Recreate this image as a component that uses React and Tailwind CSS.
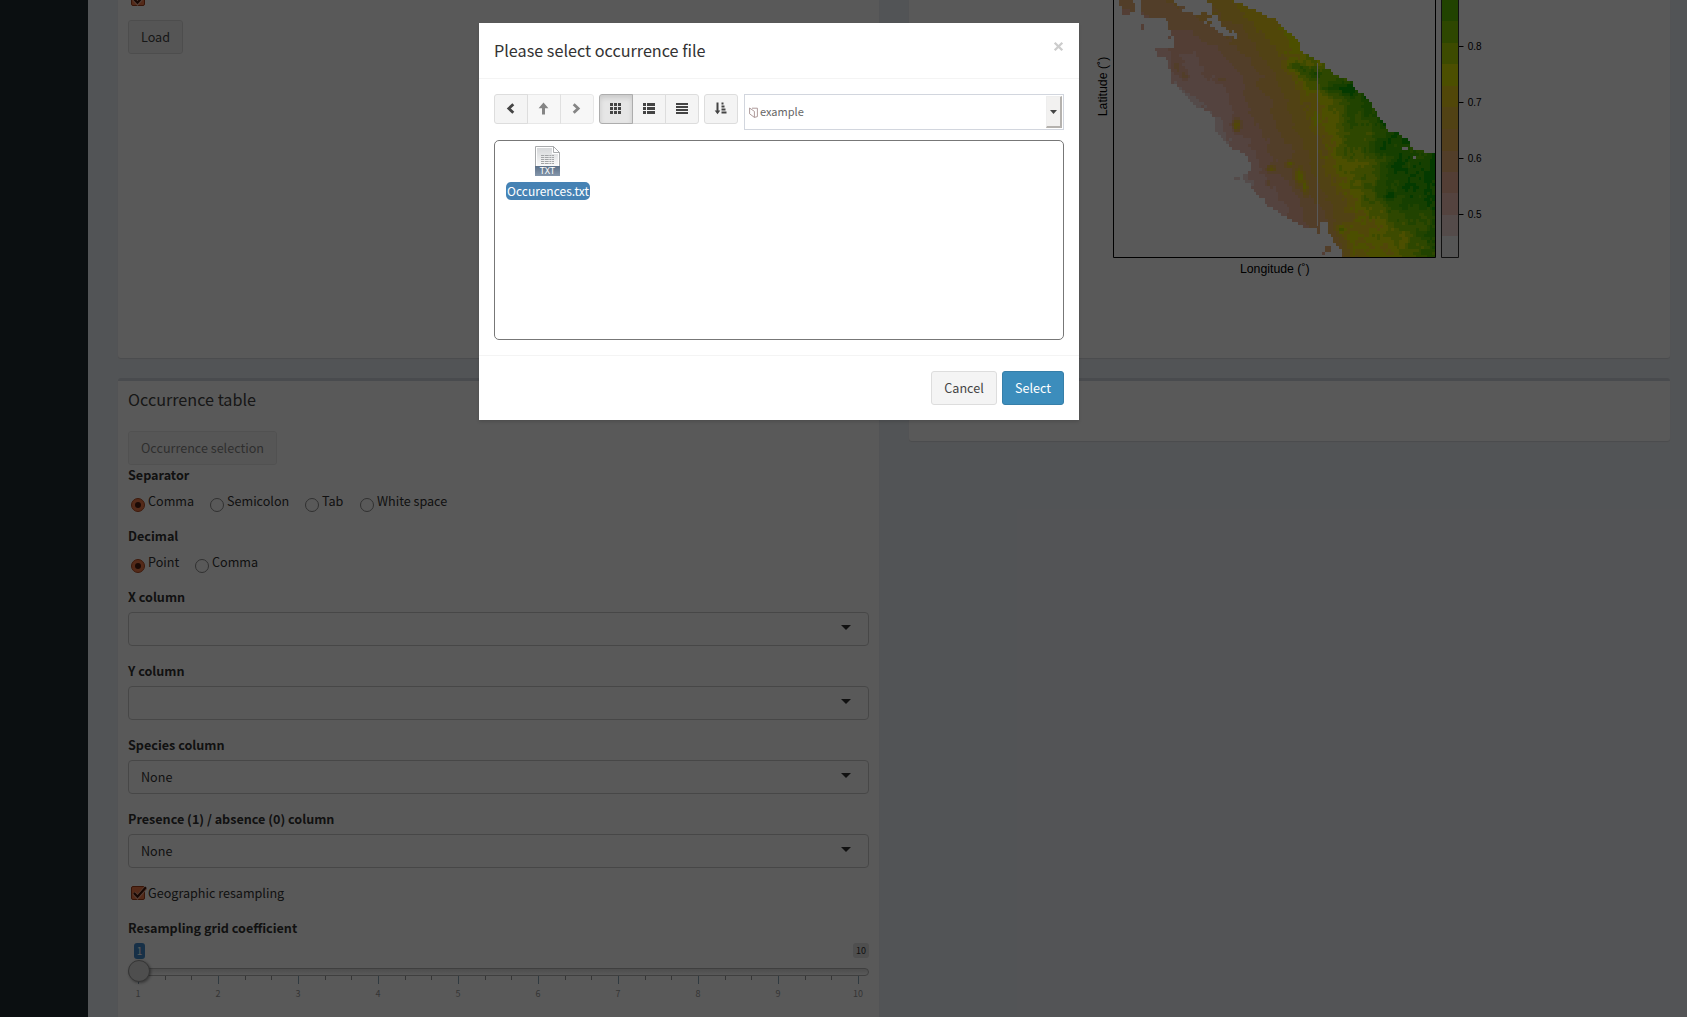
import React from "react";

const PALETTE = [
  "#f2f2f2", "#f1d6d3", "#efbfb5", "#edb197", "#ecb176", "#ebb554", "#e9bd3a",
  "#e8cb1b", "#d9e100", "#afd600", "#84cc00", "#5ec000", "#40b600", "#0ca600",
];

/* suitability levels sampled every 80 x 90 units */
const FIELD = [
  [3.6, 4, 4.5, 5, 6.2, 7.2, 7.7, 8, 9, 10, 11, 12, 12],
  [2, 2.6, 3.2, 3.6, 4.6, 5.8, 7, 8.2, 9, 10, 11, 12, 12],
  [1, 1.6, 2.2, 2.4, 3, 4.4, 5.8, 7.9, 8.6, 10, 11, 12, 12],
  [1, 1, 1.4, 1.6, 2.3, 3.5, 4.9, 6.5, 9, 11.8, 12.3, 12, 12],
  [1, 1, 1, 1, 1.4, 3.2, 4.4, 6.1, 7.8, 10.2, 12, 12, 12],
  [1, 1, 1, 1, 1, 2, 3.7, 5.1, 7.1, 9.2, 11.2, 12, 12.5],
  [1, 1, 1, 1, 1, 1.5, 2.9, 4.3, 6.5, 8.2, 10, 12, 12.8],
  [1, 1, 1, 1, 1, 1.4, 2, 3.2, 4.8, 7.2, 9.1, 10.8, 11.9],
  [1, 1, 1, 1, 1, 1, 2, 2.6, 4.2, 7.2, 8, 9, 10.9],
  [1, 1, 1, 1, 1, 1, 2, 2.4, 3, 6.6, 7.8, 8.4, 9.4],
];

const EAST = [
  [0, 450], [18, 495], [36, 535], [50, 560], [63, 595], [85, 612], [100, 630], [120, 655],
  [155, 663], [165, 685], [180, 705], [190, 730], [205, 740], [222, 762], [235, 790],
  [245, 812], [260, 822], [275, 835], [290, 860], [300, 868], [325, 880], [345, 895],
  [365, 907], [380, 918], [394, 922], [398, 955], [412, 968], [420, 985], [440, 993],
  [452, 1008], [457, 1050], [465, 1068], [780, 1068],
];
const WEST = [
  [0, 110], [12, 118], [25, 127], [49, 127], [50, 248], [66, 261], [90, 271], [110, 279],
  [147, 279], [148, 222], [158, 231], [165, 250], [180, 262], [210, 270], [248, 276],
  [258, 294], [270, 305], [285, 312], [300, 328], [318, 347], [330, 378], [345, 400],
  [395, 408], [405, 418], [425, 434], [440, 447], [450, 457], [456, 485], [465, 497],
  [485, 510], [518, 508], [525, 486], [540, 492], [555, 512], [570, 520], [585, 535],
  [595, 548], [620, 567], [630, 590], [650, 610], [662, 640], [672, 655], [684, 680],
  [692, 685], [693, 744], [715, 757], [735, 765], [745, 785], [780, 787],
];
const HOLES = [
  [158, 0, 184, 9], [164, 9, 181, 45], [148, 40, 181, 50], [284, 0, 380, 9], [290, 9, 397, 18],
  [316, 18, 400, 27], [310, 27, 400, 36], [340, 36, 364, 46], [382, 36, 400, 46],
  [380, 54, 397, 63], [397, 46, 415, 63], [372, 63, 380, 72], [397, 63, 425, 81],
  [388, 72, 397, 81], [405, 81, 438, 90], [413, 90, 450, 99], [430, 99, 470, 108],
  [458, 90, 466, 99], [463, 108, 471, 117], [262, 118, 279, 145], [970, 438, 979, 447],
  [1002, 465, 1011, 474], [722, 664, 740, 694], [685, 680, 712, 694], [722, 672, 745, 700],
];
const ISLANDS = [
  [180, 68, 188, 86], [262, 110, 270, 119], [462, 534, 480, 543], [712, 675, 720, 703],
  [738, 740, 754, 755], [729, 757, 738, 765], [480, 95, 487, 102], [364, 40, 380, 49],
  [232, 158, 262, 172],
];
const BUMPS = [
  [470, 376, 13, 20, 5], [658, 530, 14, 30, 4], [676, 565, 7, 24, 3.5], [628, 492, 12, 9, 4],
  [575, 507, 13, 10, 4], [290, 200, 14, 20, 2.2], [312, 226, 14, 16, 2.2], [425, 240, 14, 8, 1.6],
  [566, 550, 9, 8, 1.6], [650, 200, 34, 14, 2.4], [700, 222, 40, 14, 2.8], [785, 688, 14, 14, 3],
  [770, 262, 44, 24, 1.8], [985, 560, 26, 16, 1.4], [930, 590, 30, 30, 1.8], [860, 560, 20, 12, 1.6],
];

const lerp = (a, b, t) => a + (b - a) * t;
function edge(points, y) {
  for (let i = 1; i < points.length; i++) {
    if (y <= points[i][0]) {
      const [y0, x0] = points[i - 1];
      const [y1, x1] = points[i];
      return lerp(x0, x1, (y - y0) / (y1 - y0));
    }
  }
  return points[points.length - 1][1];
}
const hash = (i, j) => {
  const s = Math.sin(i * 127.1 + j * 311.7) * 43758.5453;
  return s - Math.floor(s);
};
function smooth(x, y) {
  const i = Math.floor(x), j = Math.floor(y), u = x - i, v = y - j;
  return lerp(lerp(hash(i, j), hash(i + 1, j), u), lerp(hash(i, j + 1), hash(i + 1, j + 1), u), v) - 0.5;
}
const within = (boxes, x, y) => boxes.some(([a, b, c, d]) => x >= a && x < c && y >= b && y < d);

const CW = 8.25, CH = 9;
function buildCells() {
  const runs = [];
  for (let r = 0; r < 86; r++) {
    const y = r * CH + CH / 2;
    const w = edge(WEST, y), e = edge(EAST, y);
    let run = null;
    for (let c = 0; c < 117; c++) {
      const x = 100 + c * CW + CW / 2;
      const land = within(ISLANDS, x, y) || (x >= w && x <= e && !within(HOLES, x, y));
      let level = -1;
      if (land) {
        const gx = Math.min(11.999, (x - 100) / 80), gy = Math.min(8.999, y / 90);
        const i = Math.floor(gx), j = Math.floor(gy);
        let v = lerp(lerp(FIELD[j][i], FIELD[j][i + 1], gx - i), lerp(FIELD[j + 1][i], FIELD[j + 1][i + 1], gx - i), gy - j);
        const rough = v > 6.6 && y > 150 ? 1 : 0.24;
        v += rough * (smooth(x / 48, y / 44) * 1.8 + smooth(x / 19, y / 19) * 1.9 + (hash(c, r) - 0.5) * 0.8);
        for (const [bx, by, rx, ry, a] of BUMPS) v += a * Math.exp(-(((x - bx) / rx) ** 2) - ((y - by) / ry) ** 2);
        level = Math.max(1, Math.min(13, Math.round(v)));
      }
      if (run && run.level === level) run.n++;
      else {
        run = { c, r, n: 1, level };
        if (level > 0) runs.push(run);
      }
    }
  }
  return runs;
}
const CELLS = buildCells();

const LEGEND = [
  [0, 21, 11], [21, 43, 10], [43, 64, 9], [64, 86, 8], [86, 107, 7], [107, 129, 6],
  [129, 151, 5], [151, 172, 4], [172, 193, 3], [193, 215, 2], [215, 236, 1], [236, 258, 0],
];

function SuitabilityMap() {
  return (
    <svg width="400" height="280" viewBox="1090 0 400 280" className="block">
      <g shapeRendering="crispEdges">
        {CELLS.map((k, i) => (
          <rect key={i} x={1113.4 + (k.c * CW) / 3} y={(k.r * CH) / 3} width={(k.n * CW) / 3} height={CH / 3} fill={PALETTE[k.level]} />
        ))}
        <rect x="1317" y="63" width="1" height="163" fill="#fff" />
      </g>
      <path d="M1113.5 0V257.5H1435.5V0" fill="none" stroke="#000" strokeWidth="1" />
      {LEGEND.map(([a, b, l]) => (
        <rect key={a} x="1441.5" y={a} width="17" height={b - a} fill={PALETTE[l]} shapeRendering="crispEdges" />
      ))}
      <path d="M1441.5 0V257.5H1458.5V0" fill="none" stroke="#333" strokeWidth="1" />
      {[["0.8", 46.5], ["0.7", 102.5], ["0.6", 158.5], ["0.5", 214.5]].map(([t, y]) => (
        <g key={t}>
          <path d={`M1459 ${y}H1463.5`} stroke="#000" />
          <text x="1467.7" y={y + 3.7} fontSize="10" fontFamily="Liberation Sans, sans-serif" fill="#000">{t}</text>
        </g>
      ))}
      <text x="1274.8" y="272.7" textAnchor="middle" fontSize="12.3" fontFamily="Liberation Sans, sans-serif">Longitude (˚)</text>
      <text transform="translate(1107 86.5) rotate(-90)" textAnchor="middle" fontSize="12.3" fontFamily="Liberation Sans, sans-serif">Latitude (˚)</text>
    </svg>
  );
}

function Radio({ label, checked, className }) {
  return (
    <div className={`flex h-5 items-center pl-[3px] ${className}`}>
      <span
        className={`mt-2 mr-[3px] flex size-3.5 shrink-0 items-center justify-center rounded-full border ${
          checked ? "border-[#b04a22] bg-[#f07a48]" : "border-[#8a8a8a] bg-white"
        }`}
      >
        {checked && <span className="size-1.5 rounded-full bg-[#4a1e12]" />}
      </span>
      <span className="whitespace-nowrap">{label}</span>
    </div>
  );
}

function Check({ className }) {
  return (
    <svg width="17" height="15" viewBox="0 0 17 15" className={className}>
      <rect x="0.5" y="0.5" width="13" height="13" rx="1.5" fill="#f07a48" stroke="#a03c18" />
      <path d="M3 7L6.5 11L14.5 2" fill="none" stroke="#f5b397" strokeWidth="4" />
      <path d="M3 7L6.5 10.7L15 1.3" fill="none" stroke="#45190c" strokeWidth="2.2" />
    </svg>
  );
}

function SelectField({ label, value }) {
  return (
    <div className="mb-[15px]">
      <div className="mb-[5px] h-5 font-bold">{label}</div>
      <div className="flex h-[34px] items-center justify-between rounded border border-[#ccc] pr-[17px] pl-3">
        <span>{value}</span>
        <svg width="10" height="5" viewBox="0 0 10 5" className="mb-[3px]"><path d="M0 0H10L5 5Z" fill="#333" /></svg>
      </div>
    </div>
  );
}

function Slider() {
  return (
    <div className="relative h-[60px] w-[741px] text-[9px] leading-3">
      <div className="absolute top-[25px] h-2 w-full rounded-full border border-[#b5b5b5] bg-gradient-to-b from-[#dedede] to-white" />
      <div className="absolute top-0 left-1.5 flex h-4 w-[11px] items-center justify-center rounded-[3px] bg-[#428bca] text-[10px] text-white">1</div>
      <div className="absolute top-0 right-0 flex h-[15px] w-4 items-center justify-center rounded-[3px] bg-[#e1e1e1] text-[9px] text-[#333]">10</div>
      {Array.from({ length: 28 }, (_, i) => (
        <span
          key={i}
          className={i % 3 === 0 ? "absolute top-[33px] h-2 w-px bg-[#8aa5b8]" : "absolute top-[33px] h-1 w-px bg-[#999]"}
          style={{ left: Math.round(10 + (i * 80) / 3) }}
        />
      ))}
      {Array.from({ length: 10 }, (_, i) => (
        <span key={i} className="absolute top-[45px] w-5 text-center text-[#999]" style={{ left: i * 80 }}>{i + 1}</span>
      ))}
      <div className="absolute top-[17px] left-0 size-[22px] rounded-full border border-[#999] bg-[#dedede] shadow-[1px_1px_3px_rgba(0,0,0,0.4)]" />
    </div>
  );
}

const ICONS = {
  back: <path d="M9.3 2.2L4.8 6.5L9.3 10.8" fill="none" stroke="currentColor" strokeWidth="2.8" />,
  up: <path d="M6.5 0.6L11.4 6.2H8V12.4H5V6.2H1.6Z" fill="currentColor" />,
  next: <path d="M3.7 2.2L8.2 6.5L3.7 10.8" fill="none" stroke="currentColor" strokeWidth="2.8" />,
  grid: (
    <path d="M1 1h3v3h-3zM5 1h3v3h-3zM9 1h3v3h-3zM1 5h3v3h-3zM5 5h3v3h-3zM9 5h3v3h-3zM1 9h3v3h-3zM5 9h3v3h-3zM9 9h3v3h-3z" fill="currentColor" />
  ),
  list: <path d="M1 1h3v3h-3zM5 1h8v3h-8zM1 5h3v3h-3zM5 5h8v3h-8zM1 9h3v3h-3zM5 9h8v3h-8z" fill="currentColor" />,
  rows: <path d="M1 1h12v2h-12zM1 4h12v2h-12zM1 7h12v2h-12zM1 10h12v2h-12z" fill="currentColor" />,
  sort: (
    <path d="M2.5 0.5h2v8h1.8L3.5 12.2L0.7 8.5h1.8zM7.5 0.5h2v2h-2zM7.5 3.5h3v2h-3zM7.5 6.5h4v2h-4zM7.5 9.5h5v2h-5z" fill="currentColor" />
  ),
};
const Icon = ({ name }) => <svg width="13" height="13" viewBox="0 0 13 13">{ICONS[name]}</svg>;

function ToolButton({ icon, className = "" }) {
  return (
    <div className={`flex h-[30px] items-center justify-center border border-[#ddd] bg-[#f4f4f4] pr-0.5 pb-px text-[#444] ${className}`}>
      <Icon name={icon} />
    </div>
  );
}

function FileIcon() {
  return (
    <svg width="27" height="32" viewBox="0 0 27 32" className="mr-0.5">
      <defs>
        <linearGradient id="page" x1="0" y1="0" x2="0" y2="1"><stop offset="0" stopColor="#d6d8da" /><stop offset="1" stopColor="#fafafa" /></linearGradient>
        <linearGradient id="band" x1="0" y1="0" x2="0" y2="1"><stop offset="0" stopColor="#5c7088" /><stop offset="1" stopColor="#8496ab" /></linearGradient>
      </defs>
      <path d="M1.5 1.5H19.5L25.5 7.5V30.5H1.5Z" fill="#fff" stroke="#a9abad" />
      <path d="M3 3H18V9H24V21H3Z" fill="url(#page)" />
      <path d="M19.5 1.5V7.5H25.5Z" fill="#fff" stroke="#a9abad" />
      <path d="M7 10.5H20M7 12.5H20M7 14.5H20M7 16.5H20M7 18.5H20" stroke="#a2a4a6" strokeDasharray="3 0.7 4 0.7 2 0.7" />
      <rect x="1" y="21" width="25" height="10" fill="url(#band)" />
      <text x="13.5" y="29.2" textAnchor="middle" fontSize="9" fontFamily="Noto Sans, sans-serif" fill="#fff">TXT</text>
    </svg>
  );
}

function Modal() {
  return (
    <div className="absolute inset-0 flex items-start bg-black/65 pt-[23px] pl-[479px]">
      <div className="flex h-[397px] w-[600px] flex-col bg-white text-[#333] shadow-[0_2px_3px_rgba(0,0,0,0.125)]">
        <div className="flex h-14 justify-between border-b border-[#f4f4f4] px-[15px]">
          <div className="mt-[14px] h-[26px] text-[16.2px] leading-[26px]">Please select occurrence file</div>
          <svg width="11" height="11" viewBox="0 0 11 11" className="mt-[18px]"><path d="M1.7 1.7L9.3 9.3M9.3 1.7L1.7 9.3" stroke="#ccc" strokeWidth="2.3" /></svg>
        </div>
        <div className="flex h-[277px] flex-col border-b border-[#f4f4f4] px-[15px] pt-[15px]">
          <div className="flex h-9 items-start">
            <div className="mr-[5px] flex w-[100px]">
              <ToolButton icon="back" className="w-[34px] rounded-l-[3px]" />
              <ToolButton icon="up" className="-ml-px w-[34px] opacity-65" />
              <ToolButton icon="next" className="-ml-px w-[34px] rounded-r-[3px] opacity-65" />
            </div>
            <div className="mr-[5px] flex w-[100px]">
              <ToolButton icon="grid" className="z-10 w-[34px] rounded-l-[3px] !border-[#adadad] !bg-[#e6e6e6] shadow-[inset_0_3px_5px_rgba(0,0,0,0.125)]" />
              <ToolButton icon="list" className="-ml-px w-[34px]" />
              <ToolButton icon="rows" className="-ml-px w-[34px] rounded-r-[3px]" />
            </div>
            <ToolButton icon="sort" className="mr-1.5 w-[34px] rounded-[3px]" />
            <div className="flex h-9 w-80 items-center border border-[#d2d6de] pr-px pl-1 text-[11px] text-[#666]">
              <svg width="9" height="11" viewBox="0 0 9 11" className="mr-0.5">
                <path d="M0.6 1V6.8L5.4 10.4V4.4ZM3 1.2H8.4V9.6L5.4 10.4" fill="#fff" stroke="#a58f8f" strokeWidth="0.9" />
              </svg>
              <span className="mb-0.5 flex-1">example</span>
              <span className="flex h-8 w-4 items-center justify-center border border-t-[#eee] border-r-2 border-r-[#b5b2ae] border-b-2 border-b-[#b5b2ae] border-l-[#eee] bg-[#f2f1f0]">
                <svg width="7" height="4" viewBox="0 0 7 4"><path d="M0 0H7L3.5 4Z" fill="#444" /></svg>
              </span>
            </div>
          </div>
          <div className="mt-2.5 h-[200px] rounded-[5px] border border-[#777] pl-[11px]">
            <div className="flex w-[84px] flex-col items-center pt-[4px]">
              <FileIcon />
              <div className="mt-[5px] flex h-[18px] w-[84px] items-center justify-center rounded-[5px] bg-[#4682b4] pb-px text-[12px] text-white">Occurences.txt</div>
            </div>
          </div>
        </div>
        <div className="flex justify-end gap-[5px] px-[15px] pt-[15px]">
          <div className="flex h-[34px] w-[66px] items-center justify-center rounded-[3px] border border-[#ddd] bg-[#f4f4f4] text-[#444]">Cancel</div>
          <div className="flex h-[34px] w-[62px] items-center justify-center rounded-[3px] border border-[#367fa9] bg-[#3c8dbc] text-white">Select</div>
        </div>
      </div>
    </div>
  );
}

export default function App() {
  return (
    <div className="relative flex h-[1017px] w-[1687px] overflow-hidden bg-[#ecf0f5] font-['Noto_Sans_CJK_SC',sans-serif] text-[12.6px] leading-5 text-[#333]">
      <aside className="w-[88px] shrink-0 bg-[#222d32]" />
      <main className="flex items-start gap-[30px] pl-[30px]">
        <div className="w-[761px]">
          <section className="mb-5 h-[358px] rounded-b-[3px] bg-white px-2.5 shadow-[0_1px_1px_rgba(0,0,0,0.1)]">
            <div className="h-5"><Check className="relative -top-2 left-[3px]" /></div>
            <div className="flex h-[34px] w-[55px] items-center justify-center rounded-[3px] border border-[#ddd] bg-[#f4f4f4] text-[#444]">Load</div>
          </section>
          <section className="h-[700px] rounded-[3px] border-t-[3px] border-[#d2d6de] bg-white px-2.5 shadow-[0_1px_1px_rgba(0,0,0,0.1)]">
            <div className="h-[50px] pt-2 text-[16.2px] leading-5 text-[#444]">Occurrence table</div>
            <div className="flex h-[34px] w-[149px] items-center justify-center rounded-[3px] border border-[#ddd] bg-[#f4f4f4] text-[#444] opacity-65">Occurrence selection</div>
            <div className="mb-1.5 h-5 font-bold">Separator</div>
            <div className="mb-[15px] flex">
              <Radio label="Comma" checked className="w-[79px]" />
              <Radio label="Semicolon" className="w-[95px]" />
              <Radio label="Tab" className="w-[55px]" />
              <Radio label="White space" className="" />
            </div>
            <div className="mb-1.5 h-5 font-bold">Decimal</div>
            <div className="mb-[15px] flex">
              <Radio label="Point" checked className="w-16" />
              <Radio label="Comma" className="" />
            </div>
            <SelectField label="X column" value="" />
            <SelectField label="Y column" value="" />
            <SelectField label="Species column" value="None" />
            <SelectField label="Presence (1) / absence (0) column" value="None" />
            <div className="mb-[15px] flex h-5 items-center pl-[3px]">
              <Check className="" />
              <span>Geographic resampling</span>
            </div>
            <div className="mb-[5px] h-5 font-bold">Resampling grid coefficient</div>
            <Slider />
          </section>
        </div>
        <div className="w-[761px]">
          <section className="mb-5 h-[358px] rounded-b-[3px] bg-white pl-[181px] shadow-[0_1px_1px_rgba(0,0,0,0.1)]">
            <SuitabilityMap />
          </section>
          <section className="h-[63px] rounded-[3px] border-t-[3px] border-[#d2d6de] bg-white shadow-[0_1px_1px_rgba(0,0,0,0.1)]" />
        </div>
      </main>
      <Modal />
    </div>
  );
}
